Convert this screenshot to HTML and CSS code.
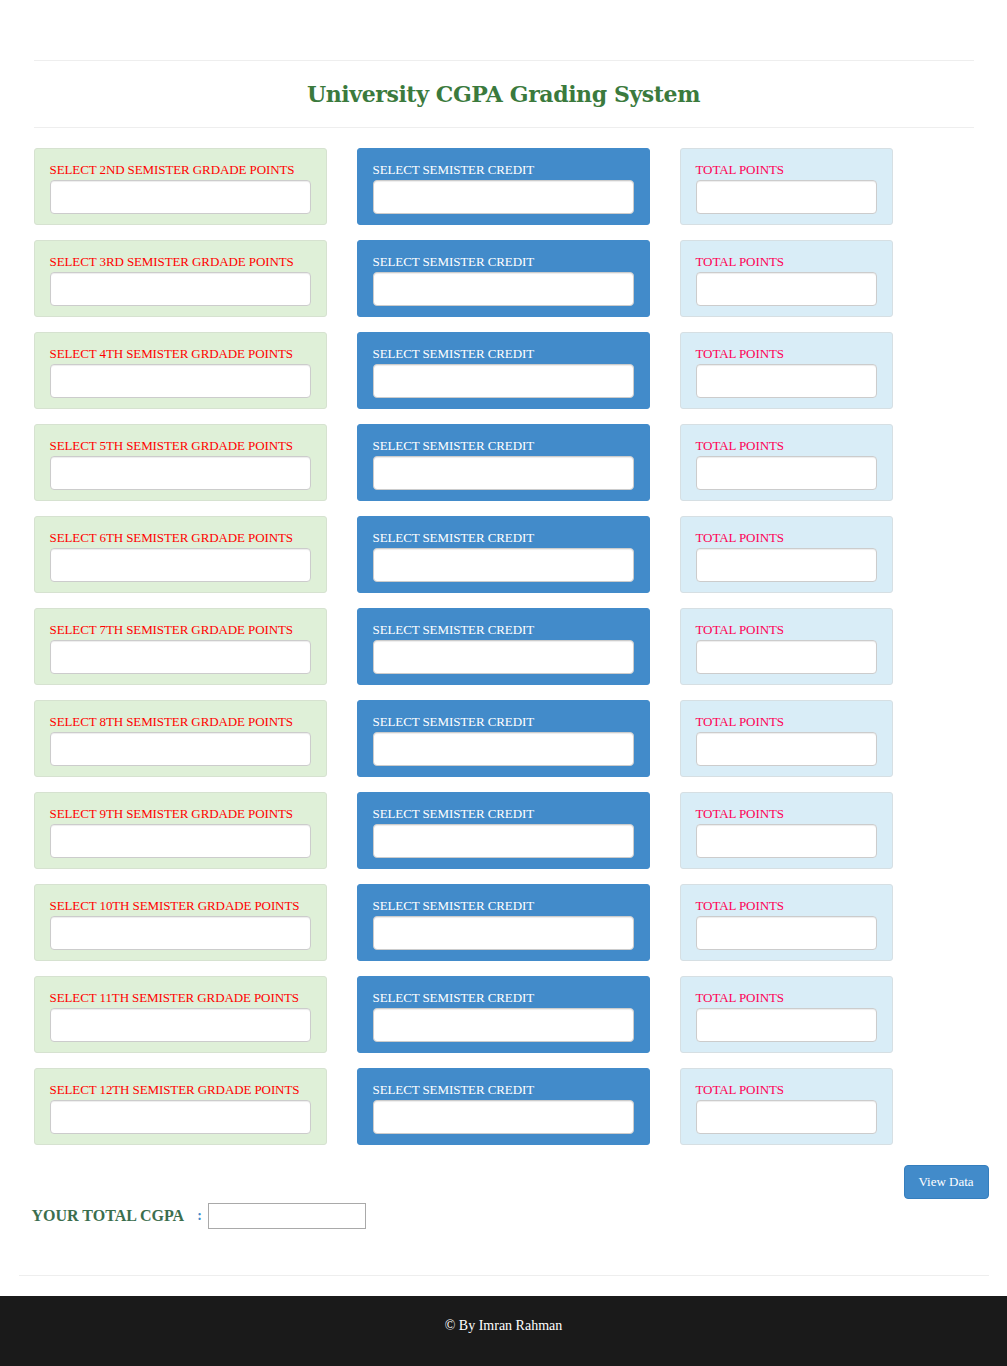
FILE: index.html
```html
<!DOCTYPE html>
<html>
<head>
<meta charset="utf-8">
<link rel="stylesheet" href="styles.css">
</head>
<body>
<div class="page">
  <div class="wrap">
    <hr class="rule">
    <h1 class="title">University CGPA Grading System</h1>
    <hr class="rule">
    <div class="grid">
      <div class="row"><div class="card green"><label>SELECT 2ND SEMISTER GRDADE POINTS</label><input type="text"></div><div class="card blue"><label>SELECT SEMISTER CREDIT</label><input type="text"></div><div class="card light"><label>TOTAL POINTS</label><input type="text"></div></div>
      <div class="row"><div class="card green"><label>SELECT 3RD SEMISTER GRDADE POINTS</label><input type="text"></div><div class="card blue"><label>SELECT SEMISTER CREDIT</label><input type="text"></div><div class="card light"><label>TOTAL POINTS</label><input type="text"></div></div>
      <div class="row"><div class="card green"><label>SELECT 4TH SEMISTER GRDADE POINTS</label><input type="text"></div><div class="card blue"><label>SELECT SEMISTER CREDIT</label><input type="text"></div><div class="card light"><label>TOTAL POINTS</label><input type="text"></div></div>
      <div class="row"><div class="card green"><label>SELECT 5TH SEMISTER GRDADE POINTS</label><input type="text"></div><div class="card blue"><label>SELECT SEMISTER CREDIT</label><input type="text"></div><div class="card light"><label>TOTAL POINTS</label><input type="text"></div></div>
      <div class="row"><div class="card green"><label>SELECT 6TH SEMISTER GRDADE POINTS</label><input type="text"></div><div class="card blue"><label>SELECT SEMISTER CREDIT</label><input type="text"></div><div class="card light"><label>TOTAL POINTS</label><input type="text"></div></div>
      <div class="row"><div class="card green"><label>SELECT 7TH SEMISTER GRDADE POINTS</label><input type="text"></div><div class="card blue"><label>SELECT SEMISTER CREDIT</label><input type="text"></div><div class="card light"><label>TOTAL POINTS</label><input type="text"></div></div>
      <div class="row"><div class="card green"><label>SELECT 8TH SEMISTER GRDADE POINTS</label><input type="text"></div><div class="card blue"><label>SELECT SEMISTER CREDIT</label><input type="text"></div><div class="card light"><label>TOTAL POINTS</label><input type="text"></div></div>
      <div class="row"><div class="card green"><label>SELECT 9TH SEMISTER GRDADE POINTS</label><input type="text"></div><div class="card blue"><label>SELECT SEMISTER CREDIT</label><input type="text"></div><div class="card light"><label>TOTAL POINTS</label><input type="text"></div></div>
      <div class="row"><div class="card green"><label>SELECT 10TH SEMISTER GRDADE POINTS</label><input type="text"></div><div class="card blue"><label>SELECT SEMISTER CREDIT</label><input type="text"></div><div class="card light"><label>TOTAL POINTS</label><input type="text"></div></div>
      <div class="row"><div class="card green"><label>SELECT 11TH SEMISTER GRDADE POINTS</label><input type="text"></div><div class="card blue"><label>SELECT SEMISTER CREDIT</label><input type="text"></div><div class="card light"><label>TOTAL POINTS</label><input type="text"></div></div>
      <div class="row"><div class="card green"><label>SELECT 12TH SEMISTER GRDADE POINTS</label><input type="text"></div><div class="card blue"><label>SELECT SEMISTER CREDIT</label><input type="text"></div><div class="card light"><label>TOTAL POINTS</label><input type="text"></div></div>
    </div>
  </div>
  <div class="outer">
    <div class="actions"><button class="btn">View Data</button></div>
    <div class="result"><span class="result-label">YOUR TOTAL CGPA</span><span class="colon">:</span><input class="result-input" type="text"></div>
    <hr class="rule foot-rule">
  </div>
</div>
<footer class="footer">© By Imran Rahman</footer>
</body>
</html>
```
FILE: styles.css
```css
html, body { margin: 0; padding: 0; background: #fff; }
body { font-family: "Liberation Serif", "DejaVu Serif", serif; }
.page { padding-top: 60px; }
.wrap { width: 940px; margin: 0 auto; }
.outer { width: 970px; margin: 0 auto; }
.rule { border: 0; border-top: 1px solid #eee; margin: 0; height: 0; }
.title {
  margin: 0; height: 66px; line-height: 66px; text-align: center;
  font-family: "DejaVu Serif", serif; font-weight: bold; font-size: 22px;
  color: #3b7a3d; letter-spacing: -0.4px;
}
.grid { padding-top: 20px; }
.row { display: flex; gap: 30px; margin-bottom: 15px; }
.card {
  box-sizing: border-box; height: 77px; padding: 12px 15px 10px;
  border: 1px solid #ddd; border-radius: 3px; display: flex; flex-direction: column;
}
.card label { display: block; font-size: 13px; line-height: 18px; margin-bottom: 1px; white-space: nowrap; letter-spacing: -0.1px; }
.card input {
  box-sizing: border-box; width: 100%; height: 34px; border: 1px solid #ccc;
  border-radius: 4px; background: #fff; box-shadow: inset 0 1px 1px rgba(0,0,0,0.075);
}
.green { width: 293px; background: #dff0d8; border-color: #d6e2d0; }
.green label { color: #ff0000; }
.blue { width: 293px; background: #428bca; border-color: #428bca; }
.blue label { color: #fff; }
.light { width: 213px; background: #d9edf7; border-color: #d6dfe3; }
.light label { color: #ff0055; }
.actions { display: flex; justify-content: flex-end; padding-top: 5px; }
.btn {
  width: 85px; height: 34px; background: #428bca; color: #fff; border: 1px solid #357ebd;
  border-radius: 4px; font-family: "Liberation Serif", serif; font-size: 13px; padding: 0;
}
.result { display: flex; align-items: center; padding-left: 13px; margin-top: 4px; }
.result-label { font-weight: bold; font-size: 16px; color: #3b6e4e; }
.colon { color: #428bca; font-weight: bold; margin-left: 13px; margin-right: 6px; font-size: 14px; }
.result-input { box-sizing: border-box; width: 158px; height: 26px; border: 1px solid #a9a9a9; }
.foot-rule { margin-top: 46px; }
.footer {
  margin-top: 20px; height: 70px; box-sizing: border-box; padding-bottom: 10px; background: #1a1a1a; color: #fff;
  display: flex; align-items: center; justify-content: center; font-size: 14px;
}
```
